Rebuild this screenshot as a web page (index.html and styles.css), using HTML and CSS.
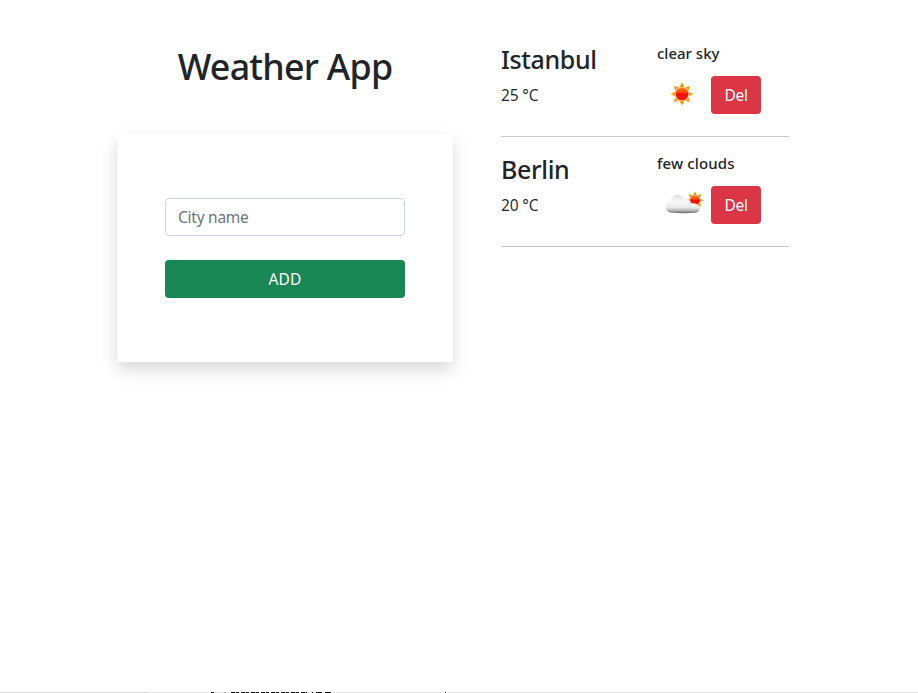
FILE: index.html
```html
<!DOCTYPE html>
<html lang="en">
<head>
<meta charset="utf-8">
<title>Weather App</title>
<link rel="stylesheet" href="styles.css">
</head>
<body>
<svg class="defs" width="0" height="0" aria-hidden="true">
  <defs>
    <linearGradient id="ray" gradientUnits="userSpaceOnUse" x1="0" y1="-11" x2="0" y2="11"><stop offset="0" stop-color="#f58a00"/><stop offset=".5" stop-color="#ffac24"/><stop offset="1" stop-color="#ff960a"/></linearGradient>
    <linearGradient id="disc" x1="0" y1="0" x2="0" y2="1"><stop offset="0" stop-color="#ff7a16"/><stop offset=".4" stop-color="#ff3c0a"/><stop offset=".5" stop-color="#fa0800"/><stop offset="1" stop-color="#ff1900"/></linearGradient>
    <linearGradient id="cloud" x1="0" y1="0" x2="0" y2="1"><stop offset="0" stop-color="#dedede"/><stop offset=".35" stop-color="#f8f8f8"/><stop offset=".68" stop-color="#ededed"/><stop offset=".86" stop-color="#b5b5b5"/><stop offset="1" stop-color="#666"/></linearGradient>
    <g id="sun">
      <path fill="url(#ray)" d="M0-11.400 2.500-7H-2.500ZM0 11.400 2.500 7H-2.500ZM-11.400 0-7-2.500V2.500ZM11.400 0 7-2.500V2.500ZM-8-8-3.200-6.800-6.800-3.200ZM8-8 3.200-6.800 6.800-3.200ZM-8 8-3.200 6.800-6.800 3.200ZM8 8 3.200 6.800 6.800 3.200Z"/>
      <circle r="6.900" fill="#ffb84a"/>
      <circle r="6.300" fill="url(#disc)"/>
    </g>
  </defs>
</svg>
<main class="layout">
  <section class="entry">
    <h1>Weather App</h1>
    <form class="card">
      <input type="text" placeholder="City name" aria-label="City name">
      <button class="btn add" type="button">ADD</button>
    </form>
  </section>
  <section class="cities">
    <article class="city">
      <div class="place"><h2>Istanbul</h2><p>25 °C</p></div>
      <div class="sky">
        <h3>clear sky</h3>
        <div class="actions">
          <svg class="icon" viewBox="0 0 50 50"><use href="#sun" x="25" y="24"/></svg>
          <button class="btn del" type="button">Del</button>
        </div>
      </div>
    </article>
    <article class="city">
      <div class="place"><h2>Berlin</h2><p>20 °C</p></div>
      <div class="sky">
        <h3 class="few">few clouds</h3>
        <div class="actions">
          <svg class="icon" viewBox="0 0 50 50">
            <use href="#sun" transform="translate(38 20.300) scale(.77)"/>
            <path fill="url(#cloud)" transform="translate(0 -.6)" d="M13 33C10.500 32.500 9 30.500 9 27.500C9 24 11 21.800 14 21.500C14.500 17.500 17 15.300 20.500 15.300C23.700 15.300 26 17 27 19.500C31 18.800 33.500 21 34 24C38 23.500 42.500 25.500 42.500 29C42.500 31.500 41 33 38.500 33.300Q25 34.300 13 33Z"/>
          </svg>
          <button class="btn del" type="button">Del</button>
        </div>
      </div>
    </article>
  </section>
</main>
<footer class="edge"></footer>
</body>
</html>
```
FILE: styles.css
```css
* { box-sizing: border-box; }
body {
  margin: 0;
  height: 693px;
  overflow: hidden;
  display: flex;
  flex-direction: column;
  background: #fff;
  color: #212529;
  font: 400 16px/24px "Noto Sans", "Open Sans", sans-serif;
}
h1, h2, h3, p { margin: 0; white-space: nowrap; }
.defs { position: absolute; }
.layout {
  flex: 1;
  display: grid;
  grid-template-columns: 336px 288px;
  gap: 48px;
  align-items: start;
  padding: 42px 0 0 117px;
}
h1 {
  text-align: center;
  font-weight: 500;
  font-size: 35.8px;
  line-height: 48px;
  letter-spacing: -0.75px;
}
.card {
  display: flex;
  flex-direction: column;
  gap: 24px;
  height: 228px;
  margin-top: 44px;
  padding: 64px 48px;
  background: #fff;
  box-shadow: 0 8px 16px rgba(0, 0, 0, .15);
}
input {
  width: 100%;
  height: 38px;
  padding: 6px 12px;
  border: 1px solid #ced4da;
  border-radius: 4px;
  color: #212529;
  font: inherit;
  font-size: 15.5px;
  letter-spacing: -0.25px;
}
input::placeholder { color: #6c757d; opacity: 1; }
.btn {
  height: 38px;
  padding: 0;
  border: 0;
  border-radius: 4px;
  color: #fff;
  font: inherit;
  font-size: 15.5px;
}
.add { background: #198754; letter-spacing: 0.1px; }
.del { width: 50px; background: #dc3545; letter-spacing: -0.3px; }
.city {
  display: grid;
  grid-template-columns: 156px 132px;
  height: 110px;
  border-bottom: 1px solid #c8c9ca;
}
.cities { margin-top: -15px; }
.place { padding-top: 17px; }
h2 { font-size: 25px; font-weight: 500; line-height: 30px; letter-spacing: -0.35px; }
.place p { margin-top: 9px; font-family: "Open Sans", "Noto Sans", sans-serif; font-size: 15.5px; letter-spacing: -0.15px; }
.sky { padding-top: 17px; }
h3 { font-size: 15px; font-weight: 500; line-height: 19px; }
.few { letter-spacing: 0.15px; }
.actions { display: flex; align-items: center; gap: 4px; margin-top: 13px; height: 38px; }
.icon { width: 50px; height: 50px; flex: none; }
.edge {
  height: 1px;
  background:
    repeating-linear-gradient(90deg, #111 0 4px, #aaa 4px 5px, #111 5px 8px, #eee 8px 10px) 231px 0 / 76px 1px no-repeat,
    linear-gradient(#222, #222) 211px 0 / 3px 1px no-repeat,
    linear-gradient(#aaa, #aaa) 224px 0 / 2px 1px no-repeat,
    repeating-linear-gradient(90deg, #222 0 1px, #eee 1px 4px, #111 4px 9px) 312px 0 / 19px 1px no-repeat,
    linear-gradient(#333, #333) 445px 0 / 1px 1px no-repeat,
    linear-gradient(90deg, #d8d8d8 148px, #ededed 148px);
}
```
